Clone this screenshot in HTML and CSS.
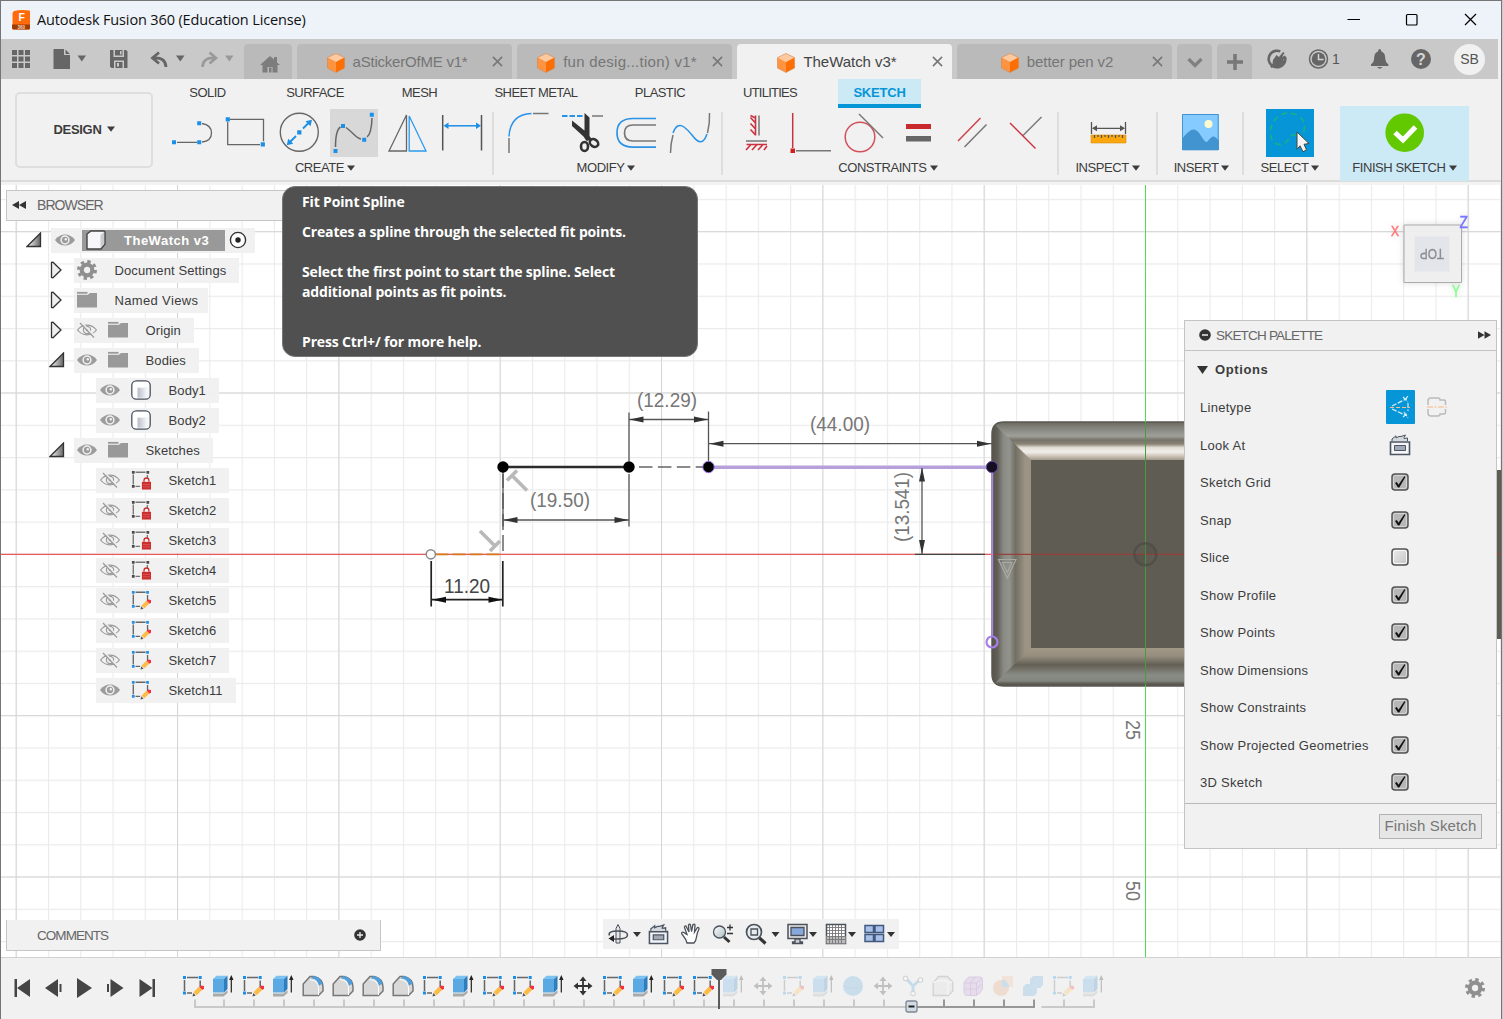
FILE: index.html
```html
<!DOCTYPE html>
<html lang="en">
<head>
<meta charset="utf-8">
<title>Autodesk Fusion 360 (Education License)</title>
<link rel="stylesheet" href="styles.css">
</head>
<body>
<svg class="sprite" aria-hidden="true">
  <defs>
    <linearGradient id="tri-fill" x1="0" y1="0" x2="1" y2="0"><stop offset="0" stop-color="#fff"/><stop offset="1" stop-color="#666"/></linearGradient>
    <linearGradient id="lens" x1="0" y1="0" x2="1" y2="1"><stop offset="0" stop-color="#fff"/><stop offset="1" stop-color="#a9bcc2"/></linearGradient>
    <linearGradient id="cyl" x1="0" y1="0" x2="1" y2="0"><stop offset="0" stop-color="#fff"/><stop offset=".3" stop-color="#fff"/><stop offset=".32" stop-color="#b9bdc9"/><stop offset=".8" stop-color="#f4f5f8"/></linearGradient>
    <linearGradient id="box-fill" x1="0" y1="0" x2="1" y2="1"><stop offset="0" stop-color="#ededed"/><stop offset="1" stop-color="#c4c4c4"/></linearGradient>
  </defs>
  <symbol id="cube" viewBox="0 0 18 20"><path d="M9 .5 17.500 4.500 9 9 .5 4.500z" fill="#ffc9a0"/><path d="M.5 4.500 9 9v10.500L.5 15z" fill="#ff9440"/><path d="M17.500 4.500 9 9v10.500l8.500-4.500z" fill="#fd6f02"/><path d="M9 .5 17.500 4.500V15L9 19.500.5 15V4.500z" fill="none" stroke="#d98447" stroke-width=".6"/></symbol>
  <symbol id="close" viewBox="0 0 12 12"><path d="M1 1l10 10M11 1 1 11" fill="none" stroke="#777" stroke-width="1.700"/></symbol>
  <symbol id="caret" viewBox="0 0 8 6"><path d="M0 .4h8L4 5.800z" fill="currentColor"/></symbol>
  <symbol id="eye" viewBox="0 0 20 20"><path d="M0 10C5 2.600 15 2.600 20 10 15 17.400 5 17.400 0 10z" fill="#9c9c9c"/><circle cx="10" cy="10" r="3.900" fill="#9c9c9c" stroke="#f1f1f1" stroke-width="1.500"/><circle cx="10.800" cy="9.300" r="1.200" fill="#f1f1f1"/></symbol>
  <symbol id="eye-off" viewBox="0 0 20 20"><path d="M.6 10C5.500 3.500 14.500 3.500 19.400 10 14.500 16.500 5.500 16.500 .6 10z" fill="none" stroke="#9a9a9a" stroke-width="1.200"/><circle cx="10" cy="10" r="3.600" fill="none" stroke="#9a9a9a" stroke-width="1.200"/><circle cx="10" cy="10" r="1.300" fill="#9a9a9a"/><path d="M4.500 2.500l14 14.500" stroke="#f1f1f1" stroke-width="1.500"/><path d="M3 3l14 14.500" stroke="#9a9a9a" stroke-width="1.200"/></symbol>
  <symbol id="folder" viewBox="0 0 20 20"><path d="M0 5h10.500L13 3h7v14.500H0z" fill="#999"/><path d="M0 2.800h10.500" stroke="#999" stroke-width="1.800"/><path d="M0 4.500h10.500" stroke="#ddd"/></symbol>
  <symbol id="gear" viewBox="0 0 20 20"><circle cx="10" cy="10" r="8.500" fill="none" stroke="currentColor" stroke-width="3" stroke-dasharray="3.340 3.340"/><circle cx="10" cy="10" r="5.300" fill="none" stroke="currentColor" stroke-width="4.200"/></symbol>
  <symbol id="body" viewBox="0 0 20 20"><rect x=".8" y=".8" width="18.400" height="18.400" rx="4.500" fill="url(#cyl)"/><path d="M2 2h16v4.500q-8 2.500-16 0z" fill="#fff"/><rect x="1.800" y="1.800" width="16.400" height="16.400" rx="3.500" fill="none" stroke="#fff"/><rect x=".8" y=".8" width="18.400" height="18.400" rx="4.500" fill="none" stroke="#4b535f" stroke-width="1.300"/></symbol>
  <symbol id="sk-lock" viewBox="0 0 22 22"><path d="M5 2.500h11M2.500 5v11M18 5.500V10M5 18h5" fill="none" stroke="#777" stroke-width="1.500"/><path d="M1 1h3v3H1zM17 1h3v3h-3zM1 16.500h3v3H1z" fill="#4a4a4a"/><path d="M12 13h10v8.500H12z" fill="#cc2d2d"/><path d="M14.300 13v-1.500a2.700 2.700 0 0 1 5.400 0V13" fill="none" stroke="#cc2d2d" stroke-width="1.400"/><path d="M13 16h8M13 18.500h8" stroke="#e06060" stroke-width=".8"/></symbol>
  <symbol id="sk-edit" viewBox="0 0 22 22"><path d="M5 2.500h11M2.500 5v11M18.200 5.500V12M5 18h5" fill="none" stroke="#666" stroke-width="1.500"/><path d="M1 1h3v3H1zM16.700 1h3v3h-3zM1 16.500h3v3H1z" fill="#1c8fe6"/><path d="M16.800 11.800 20.200 14.800 14.800 20.200 11.500 17.300z" fill="#fdbc45"/><path d="M17.300 12 19 10.500 22 11v2.500L20.500 15z" fill="#f3323f"/><path d="M11.200 18l2.600 2.500-3.300 1z" fill="#555"/></symbol>
  <symbol id="extrude" viewBox="0 0 22 22"><path d="M1 18.500h10.500l4-3.500v3L11.500 21.500H1z" fill="#aaa"/><path d="M1 4 4.500.8H15.500L12 4z" fill="#7cc2f0"/><path d="M1 4h11v13.500H1z" fill="#5aa9e2"/><path d="M12 4 15.500.8V14L12 17.500z" fill="#2e7dbd"/><path d="M19.300 17.500V4M18 4.500 19.300 1.500 20.600 4.500z" fill="#222" stroke="#222" stroke-width="1.200"/></symbol>
  <symbol id="fillet" viewBox="0 0 22 22"><path d="M1.200 20.500V9L8 1.500h4Q20.800 3.500 21 12v4l-4.500 4.500z" fill="#d9d9d9" stroke="#777" stroke-width="1.500"/><path d="M8.500 3.500Q16 3 16.500 11L20.500 8.500Q18 1.500 11.500.9z" fill="#4c9fdc"/><path d="M16.500 20V12.500q-.3-7-8.500-8" fill="none" stroke="#fff"/></symbol>
  <symbol id="move" viewBox="0 0 22 22"><path d="M11 4v14M4 11h14" stroke="#333" stroke-width="1.800"/><path d="M11 1.500l3.500 4.500h-7zM11 20.500l3.500-4.500h-7zM1.500 11l4.500-3.500v7zM20.500 11l-4.500-3.500v7z" fill="#333"/></symbol>
  <symbol id="sphere" viewBox="0 0 22 22"><circle cx="11" cy="11" r="10" fill="#58a5dd"/><path d="M1 11q10 5 20 0" fill="none" stroke="#3e8cc8"/></symbol>
  <symbol id="joint" viewBox="0 0 22 22"><path d="M5 4.500 11 11l6.500-6M11 11v7" fill="none" stroke="#489bd6" stroke-width="3"/><circle cx="3.500" cy="3.500" r="2.400" fill="#fff" stroke="#666"/><circle cx="18.500" cy="5" r="2.400" fill="#fff" stroke="#666"/><circle cx="11" cy="18.500" r="2.400" fill="#fff" stroke="#666"/></symbol>
  <symbol id="solid" viewBox="0 0 22 22"><path d="M1.200 20.500V8L6.500 1.500h9L20.800 7v9l-4.500 4.500z" fill="#ddd" stroke="#777" stroke-width="1.300"/><path d="M1.500 8Q4 5.500 11 5.500t5 3V20M16 8l4.500-1.500" fill="none" stroke="#fff" stroke-width="1.300"/></symbol>
  <symbol id="form" viewBox="0 0 22 22"><path d="M2 8Q2 5.500 7 2h11q2.500 0 2.500 2.500V14Q18 19 14 20.500H5q-3 0-3-3z" fill="#c7a0df" stroke="#9764bb"/><path d="M2 8h12.500q3-2 6-5M14.500 8v12.500M2 14h12.500l6-5M8.500 8v12.500M8.500 8 13 2" fill="none" stroke="#9764bb"/></symbol>
  <symbol id="split" viewBox="0 0 22 22"><circle cx="9" cy="13" r="8" fill="#e9a070"/><path d="M10 1h11v11H10z" fill="#f5bd94"/><path d="M10 4.500A8 8 0 0 1 17 12h-7z" fill="#5da8dc"/></symbol>
  <symbol id="combine" viewBox="0 0 22 22"><path d="M1 12 4 9h4V4l3-3h10v9l-3 3h-3v5l-3 3H1z" fill="#5ba8dd"/><path d="M8 12h6V4h7" fill="none" stroke="#78bbe9"/></symbol>
  <symbol id="lookat" viewBox="0 0 22 22"><path d="M1.500 8h19v12.500h-19z" fill="#f3f5f8" stroke="#4c5563" stroke-width="1.600"/><path d="M5.500 11.500h11v5h-11z" fill="#9fa8b3" stroke="#4c5563"/><path d="M3 7V5L7 1.800V4l3-1.500h2L16.500 1 15 3.500v1L18.500 4v3" fill="#d5d9de" stroke="#4c5563"/></symbol>
  <symbol id="check-on" viewBox="0 0 18 18"><rect x="1" y="1" width="16" height="16" rx="3" fill="#b7b7b7" stroke="#555" stroke-width="1.500"/><rect x="2.500" y="2.500" width="13" height="13" rx="2" fill="none" stroke="#d5d5d5"/><path d="M4 10l1.800-1 1.700 2.800L13.300 3.200l1.200.6L8.300 14.500H7z" fill="#111"/></symbol>
  <symbol id="check-off" viewBox="0 0 18 18"><rect x="1" y="1" width="16" height="16" rx="3" fill="url(#box-fill)" stroke="#555" stroke-width="1.500"/><rect x="2.500" y="2.500" width="13" height="13" rx="2" fill="none" stroke="#fafafa"/></symbol>
  <symbol id="tw-closed" viewBox="0 0 14 18"><path d="M2.500 1.500 4 1.200 12 9 4 16.800l-1.500-.3z" fill="#eee" stroke="#333" stroke-width="1.300"/></symbol>
  <symbol id="tw-open" viewBox="0 0 16 16"><path d="M1 14.500 14.500 1v13.500z" fill="url(#tri-fill)" stroke="#333" stroke-width="1.300"/></symbol>
</svg>

<div class="app">
  <header class="titlebar">
    <svg class="app-logo" viewBox="0 0 18 20"><path d="M2 1Q9-.5 17.500.5q.5 0 .5 1V18q0 1.500-1.500 1.500H2Q0 19.500.5 17V3z" fill="#ff6b0a"/><path d="M0 14.500h18V18q0 1.500-1.500 1.500H2q-2 0-2-1.500z" fill="#9d3c02"/><text x="6.500" y="10.500" font-family="Liberation Sans" font-size="10.500" font-weight="700" fill="#fff">F</text><text x="5.500" y="18.500" font-family="Liberation Sans" font-size="4.500" font-weight="700" fill="#ffd9bd">360</text></svg>
    <span class="app-title">Autodesk Fusion 360 (Education License)</span>
    <svg class="win-buttons" viewBox="0 0 140 20" fill="none" stroke="#000" stroke-width="1.200"><path d="M10.500 9.500h12.500M128 4l11 11M139 4l-11 11" /><rect x="69.500" y="4.500" width="10.500" height="10.500" rx="1"/></svg>
  </header>

  <nav class="tabbar">
    <div class="quick">
      <svg class="q-icons" viewBox="0 39 243 40">
        <path d="M12 50h5v5h-5zM18.500 50h5v5h-5zM25 50h5v5h-5zM12 56.500h5v5h-5zM18.500 56.500h5v5h-5zM25 56.500h5v5h-5zM12 63h5v5h-5zM18.500 63h5v5h-5zM25 63h5v5h-5z" fill="#666"/>
        <path d="M53.500 49H64v6h6v14H53.500zM65.500 49.500 70 54h-4.500z" fill="#666"/>
        <path d="M77.500 55.500h8.500l-4.200 6z" fill="#666"/>
        <path d="M110 50h16l1.500 1.500V68h-16L110 66.500z" fill="#666"/><path d="M113.500 50v7h10.500v-7M114 68v-7.500h10V68" fill="#c9c9c9"/><path d="M115 50h7.500v5.500H115zM115.500 62h7v6h-7z" fill="#666"/><path d="M120 51h1.500v3.500H120zM117 63h2v3.500h-2z" fill="#c9c9c9"/>
        <path d="M159 52.500 152.500 58l6.500 5.500M153.500 58q12-1 12.500 9" fill="none" stroke="#666" stroke-width="2.800"/>
        <path d="M176 55.500h8.500l-4.200 6z" fill="#666"/>
        <path d="M209.500 52.500 216 58l-6.500 5.500M215 58q-12-1-12.500 9" fill="none" stroke="#999" stroke-width="2.600"/>
        <path d="M225 55.500h8.500l-4.200 6z" fill="#999"/>
      </svg>
    </div>
    <div class="tab tab-home"><svg width="20" height="18" viewBox="0 0 20 18"><path d="M10 1 14 4.500V2h3v5.500L20 10h-2.500v7.500h-5V12h-5v5.500h-5V10H0zM9 12.500h2.500v5H9z" fill="#7d7d7d"/></svg></div>
    <div class="tab doc"><span class="doc-label"><svg class="cube"><use href="#cube"/></svg><span class="t1">aStickerOfME v1*</span></span><svg class="x"><use href="#close"/></svg></div>
    <div class="tab doc"><span class="doc-label"><svg class="cube"><use href="#cube"/></svg><span class="t2">fun desig...tion) v1*</span></span><svg class="x"><use href="#close"/></svg></div>
    <div class="tab doc active"><span class="doc-label"><svg class="cube"><use href="#cube"/></svg><span class="t3">TheWatch v3*</span></span><svg class="x"><use href="#close"/></svg></div>
    <div class="tab doc"><span class="doc-label"><svg class="cube"><use href="#cube"/></svg><span class="t4">better pen v2</span></span><svg class="x"><use href="#close"/></svg></div>
    <div class="tab tab-small"><svg width="16" height="16" viewBox="0 0 16 16"><path d="M1.500 5 8 11.500 14.500 5" fill="none" stroke="#808080" stroke-width="3.200"/></svg></div>
    <div class="tab tab-small"><svg width="16" height="16" viewBox="0 0 16 16"><path d="M8 0v16M0 8h16" stroke="#777" stroke-width="3.500"/></svg></div>
    <div class="status">
      <svg class="s-icons" viewBox="1253 39 180 40">
        <circle cx="1277" cy="59" r="8.300" fill="none" stroke="#666" stroke-width="2.600" stroke-dasharray="44 8.150" transform="rotate(-12 1277 59)"/><path d="M1273 60l3.500-5 2.500 2 4-5 1.500 1-2.500 4 3-1.500 1 1.500-3 3 2 1-4 4q-3 2.500-6 1l-3.500 2-1.500-2 2.500-2z" fill="#666"/>
        <circle cx="1318.500" cy="59" r="9" fill="none" stroke="#666" stroke-width="1.500"/><circle cx="1318.500" cy="59" r="6.800" fill="#666"/><path d="M1318.500 54v5.500h5" fill="none" stroke="#d5d5d5" stroke-width="1.500"/>
        <text x="1332" y="64" font-family="Liberation Sans" font-size="14" fill="#555">1</text>
        <path d="M1371 66v-1.500q3-2 3-5 0-7 4-8 0-2.500 1.700-2.500t1.700 2.500q4 1 4 8 0 3 3 5V66zM1377 67h5.500q-2.700 3.500-5.500 0z" fill="#666"/>
        <circle cx="1421" cy="59" r="10" fill="#666"/><text x="1421" y="64.800" text-anchor="middle" font-family="Liberation Sans" font-size="16" font-weight="700" fill="#d5d5d5">?</text>
      </svg>
      <span class="avatar">SB</span>
    </div>
  </nav>

  <section class="ribbon">
    <button class="workspace">DESIGN <svg class="caret"><use href="#caret"/></svg></button>
    <div class="ribbon-main">
      <div class="ribbon-tabs">
        <span class="w-solid">SOLID</span><span class="w-surface">SURFACE</span><span class="w-mesh">MESH</span><span class="w-sheet">SHEET METAL</span><span class="w-plastic">PLASTIC</span><span class="w-util">UTILITIES</span><span class="w-sketch current">SKETCH</span>
      </div>
      <div class="groups">
        <div class="group g-create">
          <div class="tools">
            <svg viewBox="168 109 48 48" fill="none" stroke="#666" stroke-width="1.300"><path d="M177 142.300h20M202 123.500q9.500 1.500 9.500 9.500t-9.500 9"/><path d="M172 140.200h4v4h-4zM197.200 140.200h4v4h-4zM197.200 121.300h4v4h-4z" fill="#1c8fe6" stroke="none"/></svg>
            <svg viewBox="222 109 48 48" fill="none" stroke="#666" stroke-width="1.300"><path d="M230 119.300h33.500v22M227.700 122v22.700H260"/><path d="M225.700 117.200h4.200v4.200h-4.200zM260.700 142.200h4.200v4.200h-4.200z" fill="#1c8fe6" stroke="none"/></svg>
            <svg viewBox="276 109 48 48" fill="none" stroke="#666" stroke-width="1.400"><circle cx="299.300" cy="132.300" r="19"/><path d="M303 128.500l6-6M296 136l-6 6" stroke="#1c8fe6" stroke-width="1.800"/><path d="M297.200 130.200h4.200v4.200h-4.200zM312 119.700l-1.500 6.500-5-5zM286.700 145.200l1.500-6.500 5 5z" fill="#1c8fe6" stroke="none"/></svg>
            <svg class="hover" viewBox="330 109 48 48" fill="none" stroke="#666" stroke-width="1.500"><path d="M335.500 147q0-17 5-20M346 127.500q4 3 8 7t7 4.500M367 137q4.500-3 5-19"/><path d="M333.500 149h4v4h-4zM341 124h4v4h-4zM362.200 137.700h4v4h-4zM369.800 112.700h4v4h-4z" fill="#1c8fe6" stroke="none"/></svg>
            <svg viewBox="383 109 48 48" fill="none" stroke="#666" stroke-width="1.300"><path d="M405.500 115v36H388z"/><path d="M408.200 116v35H425z" stroke="#2a9bf0"/></svg>
            <svg viewBox="437 109 48 48" fill="none" stroke="#555" stroke-width="1.500"><path d="M441.700 115v35.500M480.500 115v35.500"/><path d="M445 125.800h32" stroke="#1c8fe6"/><path d="M442.500 125.800l5-3.300v6.600zM480 125.800l-5-3.300v6.600z" fill="#1c8fe6" stroke="none"/></svg>
          </div>
          <div class="g-label">CREATE <svg class="caret"><use href="#caret"/></svg></div>
        </div>
        <div class="group g-modify">
          <div class="tools">
            <svg viewBox="504 109 48 48" fill="none" stroke="#777" stroke-width="1.500"><path d="M509 153v-15M533 113.500h15.500"/><path d="M509 136.500q1-22 22.500-23" stroke="#2a93e8"/></svg>
            <svg viewBox="558 109 48 48" fill="none" stroke="#777" stroke-width="1.500"><path d="M592 116h11" /><path d="M562 116h21" stroke="#2a93e8" stroke-width="1.800" stroke-dasharray="5.500 2"/><path d="M584.500 113l5 4.500v18.500l2.500 3.500-5.500 1.500-3-4.500-11.500-10.500v-5.500l12.500 10z" fill="#333" stroke="none"/><ellipse cx="584.500" cy="146.500" rx="3.500" ry="4.500" stroke="#333" stroke-width="2.600"/><ellipse cx="594" cy="143" rx="4.500" ry="3.500" transform="rotate(35 594 143)" stroke="#333" stroke-width="2.600"/></svg>
            <svg viewBox="612 109 48 48" fill="none" stroke="#777" stroke-width="1.700"><path d="M656 125h-23q-8.500 0-8.500 8t8.500 8h23"/><path d="M656 118.500h-23q-16 0-16 14.300t16 14.300h23" stroke="#2a93e8"/></svg>
            <svg viewBox="666 109 48 48" fill="none" stroke="#777" stroke-width="1.500"><path d="M670.500 153q0-9 2.500-18M707.500 133q2.500-10 2-20"/><path d="M673 133q4-11 11-6 4 3 8 8 10 14 15-1" stroke="#2a93e8"/></svg>
          </div>
          <div class="g-label">MODIFY <svg class="caret"><use href="#caret"/></svg></div>
        </div>
        <div class="group g-constraints">
          <div class="tools">
            <svg viewBox="732 109 48 48" fill="none" stroke="#cc3340" stroke-width="1.600"><path d="M755.500 115.500v20M755.500 123l-5-5.500M755.500 129l-5-5.500M755.500 135l-5-5.500M755.500 118l-5-2.500M746.500 144.500h20.500M751 144.500l-5 5.500M757 144.500l-5 5.500M763 144.500l-5 5.500M767 146l-3 4"/><path d="M759 115.500v20M746 141h21" stroke="#777" stroke-width="1.500"/></svg>
            <svg viewBox="786 109 48 48" fill="none" stroke="#777" stroke-width="1.500"><path d="M796 150.700h35"/><path d="M792.700 113v35" stroke="#cc3340"/><path d="M790.500 148.500h4.500v4.500h-4.500z" fill="#c22" stroke="none"/></svg>
            <svg viewBox="840 109 48 48" fill="none" stroke="#777" stroke-width="1.500"><circle cx="860" cy="137" r="14.800" stroke="#d3505a"/><path d="M859 114l24 24"/></svg>
            <svg viewBox="894 109 48 48"><path d="M906 124h25v5h-25z" fill="#c9282d"/><path d="M906 136h25v5.500h-25z" fill="#666"/></svg>
            <svg viewBox="948 109 48 48" fill="none" stroke="#777" stroke-width="1.500"><path d="M964.500 147l22-22.500"/><path d="M958 141l22.500-23" stroke="#d3404a"/></svg>
            <svg viewBox="1002 109 48 48" fill="none" stroke="#777" stroke-width="1.500"><path d="M1023 135.500l18.500-18.500"/><path d="M1010 123l25.500 25.500" stroke="#cc3340"/></svg>
          </div>
          <div class="g-label">CONSTRAINTS <svg class="caret"><use href="#caret"/></svg></div>
        </div>
        <div class="group g-inspect">
          <div class="tools">
            <svg viewBox="1084 109 48 48" fill="none" stroke="#555" stroke-width="1.300"><path d="M1091.500 122v12M1125.500 122v12M1093 128.300h31"/><path d="M1092 128.300l5-3v6zM1125 128.300l-5-3v6z" fill="#555" stroke="none"/><path d="M1091 135h35v8h-35z" fill="#fba70d" stroke="#d8920f" stroke-width=".6"/><path d="M1094.500 135v3M1098 135v2M1101.500 135v3M1105 135v2M1108.500 135v3M1112 135v2M1115.500 135v3M1119 135v2M1122.500 135v3"/></svg>
          </div>
          <div class="g-label">INSPECT <svg class="caret"><use href="#caret"/></svg></div>
        </div>
        <div class="group g-insert">
          <div class="tools">
            <svg viewBox="1176 109 48 48"><path d="M1182 114h37v36h-37z" fill="#85cbff"/><path d="M1182 139q7-9.500 11.500-9.500 4 0 8 7t6 5q4-5 6-5 2 0 5.500 4.500v9h-37z" fill="#4294d1"/><circle cx="1208.500" cy="124" r="4" fill="#fffbd0"/><path d="M1182.500 114.500h35.700v35.300h-35.700z" fill="none" stroke="#4294d1"/></svg>
          </div>
          <div class="g-label">INSERT <svg class="caret"><use href="#caret"/></svg></div>
        </div>
        <div class="group g-select">
          <div class="tools">
            <svg class="picked" viewBox="1267 109 48 48" fill="none"><path d="M1298 135q-6-.5-7 1.500c-2 4-5 8-10 8-7 0-10-6-9.500-14 1-10 9-17.500 18-17.500s16 6 16 13-2 9-7.500 9" stroke="#1bb57c" stroke-width="1.400" stroke-dasharray="6 4"/><path d="M1298 132l12 11.500-5 .8 2.500 5.500-3.500 2-3-6-3 3.500z" fill="#f5f5f5" stroke="#444"/></svg>
          </div>
          <div class="g-label">SELECT <svg class="caret"><use href="#caret"/></svg></div>
        </div>
        <div class="group g-finish">
          <div class="tools">
            <svg viewBox="1381 109 48 48"><circle cx="1404.700" cy="132.700" r="19.300" fill="#62c900"/><path d="M1395 132.500l8 7.500 12.500-13" fill="none" stroke="#fff" stroke-width="5"/></svg>
          </div>
          <div class="g-label">FINISH SKETCH <svg class="caret"><use href="#caret"/></svg></div>
        </div>
      </div>
    </div>
  </section>

  <main class="stage">
    <svg class="canvas" viewBox="1 185 1500 772">
      <defs>
        <pattern id="minor" patternUnits="userSpaceOnUse" x="1145" y="553.800" width="32.266" height="32.266"><path d="M0 .5h32.266M.5 0v32.266" stroke="#ebebeb" stroke-width="1.300"/></pattern>
        <pattern id="major" patternUnits="userSpaceOnUse" x="1145" y="553.800" width="161.330" height="161.330"><path d="M0 .5h161.330M.5 0v161.330" stroke="#d6d6d6"/></pattern>
        <linearGradient id="m-top" x1="0" y1="0" x2="0" y2="1"><stop offset="0" stop-color="#55534c"/><stop offset=".08" stop-color="#706e66"/><stop offset=".25" stop-color="#8b8b85"/><stop offset=".4" stop-color="#a0a09b"/><stop offset=".5" stop-color="#77736a"/><stop offset=".6" stop-color="#898274"/><stop offset=".69" stop-color="#e3dfd7"/><stop offset=".8" stop-color="#f1eee9"/><stop offset=".9" stop-color="#cdc5b9"/><stop offset="1" stop-color="#a39988"/></linearGradient>
        <linearGradient id="m-left" x1="0" y1="0" x2="1" y2="0"><stop offset="0" stop-color="#55534b"/><stop offset=".14" stop-color="#615f56"/><stop offset=".3" stop-color="#8b8b85"/><stop offset=".45" stop-color="#93938d"/><stop offset=".6" stop-color="#716e63"/><stop offset=".75" stop-color="#8b8476"/><stop offset=".85" stop-color="#9c9485"/><stop offset="1" stop-color="#9c9282"/></linearGradient>
        <linearGradient id="m-bot" x1="0" y1="0" x2="0" y2="1"><stop offset="0" stop-color="#a19887"/><stop offset=".2" stop-color="#958d7e"/><stop offset=".42" stop-color="#635f55"/><stop offset=".55" stop-color="#77756c"/><stop offset=".68" stop-color="#888c86"/><stop offset=".82" stop-color="#83867f"/><stop offset=".9" stop-color="#5a5851"/><stop offset="1" stop-color="#4a4942"/></linearGradient>
        <clipPath id="m-clip"><path d="M1190 422h-186q-12 0-12 12v240q0 12 12 12h186z"/></clipPath>
      </defs>
      <rect x="1" y="185" width="1500" height="772" fill="#fff"/>
      <rect x="1" y="185" width="1500" height="772" fill="url(#minor)"/>
      <rect x="1" y="185" width="1500" height="772" fill="url(#major)"/>

      <g clip-path="url(#m-clip)">
        <path d="M992 422h39v264h-39z" fill="url(#m-left)"/>
        <path d="M990 420 1031 460h159v-40z" fill="url(#m-top)"/>
        <path d="M990 688 1031 648h159v40z" fill="url(#m-bot)"/>
        <path d="M1031 460h160v188h-160z" fill="#5f5c53"/>
      </g>
      <path d="M1190 422h-186q-12 0-12 12v240q0 12 12 12h186" fill="none" stroke="#595850" stroke-width="1.500"/>
      <path d="M1490 470h11v169h-11z" fill="#5f5c53"/>

      <path d="M1 554.300h991" stroke="#e85a5a" stroke-width="1.300"/><path d="M992 554.300h509" stroke="#97403a" stroke-width="1.200"/>
      <path d="M1145 185h1v237h-1zM1145 686h1v271h-1z" fill="#4fdc4f"/><path d="M1145 422h1v264h-1z" fill="#4a9a40"/>
      <circle cx="1145.300" cy="554.300" r="11" fill="none" stroke="#4c4a43" stroke-opacity=".7" stroke-width="2.500"/><path d="M1145.300 554.300v-10a10 10 0 0 1 10 10zM1145.300 554.300v10a10 10 0 0 1-10-10z" fill="#4c4a43" fill-opacity=".3"/>
      <path d="M998.500 559.500h17.500l-8.700 18.500zM1002.500 562.500h9.500l-4.700 10z" fill="none" stroke="#aaa9a3" stroke-width="1.200"/>

      <path d="M915 554.300h70" stroke="#444" stroke-width="1.300"/>
      <path d="M708.500 467.200H992" stroke="#b5a0dc" stroke-width="3.400"/><path d="M992.200 467v170" stroke="#a78bd8" stroke-width="2"/>
      <path d="M503 467h126" stroke="#2b2b2b" stroke-width="2.600"/>
      <path d="M639 467h69" stroke="#666" stroke-width="1.700" stroke-dasharray="13.500 5.400"/>
      <path d="M503 472v82" stroke="#777" stroke-width="1.700" stroke-dasharray="16 5"/>
      <path d="M435.500 554.300h68" stroke="#d9781e" stroke-width="1.700" stroke-dasharray="13 4"/>

      <g stroke="#555" stroke-width="1.300" fill="none"><path d="M629 412.500V461M708.500 411.500V461M629 474v52.500M503 474v52.500M629 419.500h79M709 443.700h283M503 520h126M922 468v86"/></g>
      <g stroke="#222" stroke-width="1.700"><path d="M431.200 561v45.500M502.800 561v45.500M432 599.700h70"/></g>
      <g fill="#333"><path d="M629.500 419.500l14-3v6zM708 419.500l-14-3v6zM709.500 443.700l14-3v6zM991 443.700l-14-3v6zM503.500 520l14-3v6zM628.500 520l-14-3v6zM922 467.500l-3 14h6zM922 554l-3-14h6z"/><path d="M432 599.700l14-3v6zM502.500 599.700l-14-3v6z" fill="#111"/></g>
      <g stroke="#b9b9b9" stroke-width="3.600"><path d="M507 480.500l10-10M512 475.500l15 15M490 551l10-10M480 531l15 15"/></g>

      <circle cx="503" cy="467" r="5.700"/><circle cx="629" cy="467" r="5.700"/>
      <circle cx="708.500" cy="467" r="5.700" stroke="#9a6ee8" stroke-width="1"/><circle cx="992" cy="467" r="5.700" fill="#15101f" stroke="#6848a8" stroke-width="1"/>
      <circle cx="430.800" cy="554.300" r="4.600" fill="#fff" stroke="#8a8a8a" stroke-width="1.500"/><circle cx="992" cy="642" r="5.500" fill="none" stroke="#a67fe8" stroke-width="2.200"/>

      <g class="dim">
        <text x="637" y="406.500" textLength="60" lengthAdjust="spacingAndGlyphs">(12.29)</text>
        <text x="810" y="431" textLength="60" lengthAdjust="spacingAndGlyphs">(44.00)</text>
        <text x="530" y="507" textLength="60" lengthAdjust="spacingAndGlyphs">(19.50)</text>
        <text x="444" y="592.500" textLength="46" lengthAdjust="spacingAndGlyphs" class="dark">11.20</text>
        <text transform="translate(909 542) rotate(-90)" textLength="70" lengthAdjust="spacingAndGlyphs">(13.541)</text>
        <text transform="translate(1126 720) rotate(90)" textLength="20" lengthAdjust="spacingAndGlyphs">25</text>
        <text transform="translate(1126 881) rotate(90)" textLength="20" lengthAdjust="spacingAndGlyphs">50</text>
      </g>

      <g class="viewcube">
        <path d="M1404 225h57.500v57.500H1404z" fill="#f0f0f0" fill-opacity=".93" stroke="#aaa"/>
        <path d="M1414.500 236.500h35v35h-35z" fill="#e3e5ea"/>
        <text transform="translate(1444 249) rotate(180)" textLength="24" lengthAdjust="spacingAndGlyphs" font-size="15" fill="#8b8e94" stroke="#8b8e94" stroke-width=".4">TOP</text>
        <text x="1391" y="235.500" textLength="8" lengthAdjust="spacingAndGlyphs" font-size="14" fill="#f77" stroke="#f77" stroke-width=".5">X</text>
        <text x="1459.500" y="228" textLength="8.500" lengthAdjust="spacingAndGlyphs" font-size="16" fill="#77f" stroke="#77f" stroke-width=".5">Z</text>
        <text x="1452" y="296.500" textLength="8" lengthAdjust="spacingAndGlyphs" font-size="16" fill="#8f8" stroke="#8f8" stroke-width=".5">Y</text>
      </g>
    </svg>

    <aside class="browser">
      <div class="panel-head"><svg width="14" height="8" viewBox="0 0 14 8"><path d="M7 0v8L0 4zM14 0v8L7 4z" fill="#333"/></svg><span>BROWSER</span></div>
      <div class="row root"><svg class="tw open"><use href="#tw-open"/></svg><div class="pill"><svg><use href="#eye"/></svg><div class="sel"><svg viewBox="0 0 20 20"><path d="M1 4 5 1h13l1 1v12l-4 5H1z" fill="#f7f7fa" stroke="#444" stroke-width="1.400"/><path d="M14.500 5 18 2v12l-3.500 4z" fill="#c9cbd2"/></svg><b>TheWatch v3</b></div><svg class="radio" viewBox="0 0 18 18"><circle cx="9" cy="9" r="7.600" fill="#fff" stroke="#333" stroke-width="1.400"/><circle cx="9" cy="9" r="2.700" fill="#222"/></svg></div></div>
      <div class="row l1"><svg class="tw"><use href="#tw-closed"/></svg><div class="pill"><svg class="gear"><use href="#gear"/></svg><span>Document Settings</span></div></div>
      <div class="row l1"><svg class="tw"><use href="#tw-closed"/></svg><div class="pill named"><svg><use href="#folder"/></svg><span>Named Views</span></div></div>
      <div class="row l1"><svg class="tw"><use href="#tw-closed"/></svg><div class="pill"><svg><use href="#eye-off"/></svg><svg><use href="#folder"/></svg><span>Origin</span></div></div>
      <div class="row l1"><svg class="tw open"><use href="#tw-open"/></svg><div class="pill"><svg><use href="#eye"/></svg><svg><use href="#folder"/></svg><span>Bodies</span></div></div>
      <div class="row l2"><div class="pill"><svg><use href="#eye"/></svg><svg><use href="#body"/></svg><span>Body1</span></div></div>
      <div class="row l2"><div class="pill"><svg><use href="#eye"/></svg><svg><use href="#body"/></svg><span>Body2</span></div></div>
      <div class="row l1"><svg class="tw open"><use href="#tw-open"/></svg><div class="pill"><svg><use href="#eye"/></svg><svg><use href="#folder"/></svg><span>Sketches</span></div></div>
      <div class="row l2"><div class="pill"><svg><use href="#eye-off"/></svg><svg><use href="#sk-lock"/></svg><span>Sketch1</span></div></div>
      <div class="row l2"><div class="pill"><svg><use href="#eye-off"/></svg><svg><use href="#sk-lock"/></svg><span>Sketch2</span></div></div>
      <div class="row l2"><div class="pill"><svg><use href="#eye-off"/></svg><svg><use href="#sk-lock"/></svg><span>Sketch3</span></div></div>
      <div class="row l2"><div class="pill"><svg><use href="#eye-off"/></svg><svg><use href="#sk-lock"/></svg><span>Sketch4</span></div></div>
      <div class="row l2"><div class="pill"><svg><use href="#eye-off"/></svg><svg><use href="#sk-edit"/></svg><span>Sketch5</span></div></div>
      <div class="row l2"><div class="pill"><svg><use href="#eye-off"/></svg><svg><use href="#sk-edit"/></svg><span>Sketch6</span></div></div>
      <div class="row l2"><div class="pill"><svg><use href="#eye-off"/></svg><svg><use href="#sk-edit"/></svg><span>Sketch7</span></div></div>
      <div class="row l2"><div class="pill"><svg><use href="#eye"/></svg><svg><use href="#sk-edit"/></svg><span>Sketch11</span></div></div>
    </aside>

    <div class="tooltip">
      <p class="tip-title">Fit Point Spline</p>
      <p class="tip-lead">Creates a spline through the selected fit points.</p>
      <p class="tip-body">Select the first point to start the spline. Select<br>additional points as fit points.</p>
      <p class="tip-help">Press Ctrl+/ for more help.</p>
    </div>

    <aside class="palette">
      <div class="pal-head"><svg width="12" height="12" viewBox="0 0 12 12"><circle cx="6" cy="6" r="5.800" fill="#333"/><path d="M3 6h6" stroke="#eee" stroke-width="1.500"/></svg><span>SKETCH PALETTE</span><svg width="13" height="8" viewBox="0 0 14 8"><path d="M0 0v8l7-4zM7 0v8l7-4z" fill="#333"/></svg></div>
      <div class="pal-body">
        <div class="opt section"><svg width="11" height="8" viewBox="0 0 11 8"><path d="M0 0h11L5.500 8z" fill="#333"/></svg><b>Options</b></div>
        <div class="opt"><span>Linetype</span><div class="linetype"><svg class="lt-on" viewBox="0 0 29 34" fill="none" stroke="#d8eefa" stroke-width="1.200"><path d="M6 16 21 8.500M6 19l15 7M17 7l5 5M22 6l-4 5M17 27l5-4M18 22l4 6M22 13v8" stroke-dasharray="5 1.500"/><path d="M4 17.500h20" stroke="#f5c08d" stroke-dasharray="4 2"/></svg><svg class="lt-off" viewBox="0 0 20 20" fill="none" stroke="#bbb" stroke-width="1.500"><path d="M1 8V4q0-3 3-3h7q2 0 2 2h4q1.500 0 1.500 1.500V8M1 12v4q0 3 3 3h7q2 0 2-2h4q1.500 0 1.500-1.500V12"/><path d="M0 10h20" stroke="#f3cbaa" stroke-dasharray="6 1.500 2 1.500"/></svg></div></div>
        <div class="opt"><span>Look At</span><svg class="look"><use href="#lookat"/></svg></div>
        <div class="opt"><span>Sketch Grid</span><svg class="chk"><use href="#check-on"/></svg></div>
        <div class="opt"><span>Snap</span><svg class="chk"><use href="#check-on"/></svg></div>
        <div class="opt"><span>Slice</span><svg class="chk"><use href="#check-off"/></svg></div>
        <div class="opt"><span>Show Profile</span><svg class="chk"><use href="#check-on"/></svg></div>
        <div class="opt"><span>Show Points</span><svg class="chk"><use href="#check-on"/></svg></div>
        <div class="opt"><span>Show Dimensions</span><svg class="chk"><use href="#check-on"/></svg></div>
        <div class="opt"><span>Show Constraints</span><svg class="chk"><use href="#check-on"/></svg></div>
        <div class="opt"><span>Show Projected Geometries</span><svg class="chk"><use href="#check-on"/></svg></div>
        <div class="opt"><span>3D Sketch</span><svg class="chk"><use href="#check-on"/></svg></div>
      </div>
      <div class="pal-foot"><button>Finish Sketch</button></div>
    </aside>

    <div class="comments"><span>COMMENTS</span><svg width="12" height="12" viewBox="0 0 12 12"><circle cx="6" cy="6" r="5.800" fill="#333"/><path d="M3 6h6M6 3v6" stroke="#eee" stroke-width="1.300"/></svg></div>

    <div class="navbar">
      <svg viewBox="603 919 296 30" fill="none" stroke="#4b515a" stroke-width="1.300">
        <path d="M616 928.500l2-4 2 4v14.500h-4z" fill="#e5e7ea" stroke-width="1"/><path d="M609.500 935.500q-2-4.500 8.500-4.500 9.500 0 9.500 4t-10.500 4h-4" stroke-width="1.500"/><path d="M608.500 938.500l5.500-3.500v7z" fill="#222" stroke="none"/>
        <g fill="#333" stroke="none"><path d="M633 932h8l-4 5zM771.500 932h8l-4 5zM809 932h8l-4 5zM848 932h8l-4 5zM887 932h8l-4 5z"/></g>
        <use href="#lookat" x="648" y="924" width="21" height="21"/>
        <path d="M687 943q-1-4-4-7.500-2-2-1-3t4 1.500l1 .5-2.500-7q0-2 1.500-1.500l3 6-.5-7q1-1.500 2 0l1 6.500 1.500-7q1.500-1 2 .5l-.5 7 3-4.500q1.500-.5 1.500 1.500-2 4-2.500 8-.5 4-2.500 6z" fill="#fff"/>
        <circle cx="719.500" cy="932" r="6" fill="url(#lens)"/><path d="M724 937l5.500 5" stroke="#333" stroke-width="3"/><path d="M727 927.500h6M730 924.500v6M727 933.500h6" stroke="#333"/>
        <circle cx="754" cy="932" r="7.500" fill="#e7ecee" stroke-width="1.700"/><path d="M751 929h6.500v6h-6.500z"/><path d="M759.500 938l6 5.500" stroke="#333" stroke-width="3.200"/>
        <path d="M788 924.500h19v14h-19z" fill="#e8eaed" stroke-width="1.500"/><path d="M791 927.500h13v8h-13z" fill="#87a8dc"/><path d="M795 939h5v3h2.500v1.500h-10V942h2.500z" fill="#ccc"/>
        <path d="M826.500 924.500h19v19h-19z" fill="#fff" stroke-width="1.500"/><path d="M826.500 936h19v7.500h-19z" fill="#bbb" stroke="none"/><path d="M829.500 925v18.500M832.500 925v18.500M835.500 925v18.500M838.500 925v18.500M841.500 925v18.500M827 927.500h18.500M827 930.500h18.500M827 933.500h18.500M827 936.500h18.500M827 939.500h18.500" stroke="#777" stroke-width=".9"/>
        <path d="M865 925.500h8.500v7H865zM875 925.500h8.500v7H875zM865 934.500h8.500v7H865zM875 934.500h8.500v7H875z" fill="#a9c0e8" stroke="#42597f" stroke-width="1.500"/>
      </svg>
    </div>
  </main>

  <footer class="timeline">
    <svg class="playback" viewBox="13 977 145 22" fill="#454545"><path d="M14.500 979h2.500v18h-2.500zM30 979v18l-13-9zM58 979v18l-13-9zM59.500 984h2v8h-2zM77 978l15 10-15 10zM107 984h2v8h-2zM110.500 979v18l13-9zM139.500 979v18l13-9zM152.500 979h2.500v18h-2.500z"/></svg>
    <div class="history">
      <div class="feats">
        <svg><use href="#sk-edit"/></svg><svg><use href="#extrude"/></svg><svg><use href="#sk-edit"/></svg><svg><use href="#extrude"/></svg><svg><use href="#fillet"/></svg><svg><use href="#fillet"/></svg><svg><use href="#fillet"/></svg><svg><use href="#fillet"/></svg><svg><use href="#sk-edit"/></svg><svg><use href="#extrude"/></svg><svg><use href="#sk-edit"/></svg><svg><use href="#sk-edit"/></svg><svg><use href="#extrude"/></svg><svg><use href="#move"/></svg><svg><use href="#sk-edit"/></svg><svg><use href="#extrude"/></svg><svg><use href="#sk-edit"/></svg><svg><use href="#sk-edit"/></svg><svg class="off"><use href="#extrude"/></svg><svg class="off"><use href="#move"/></svg><svg class="off"><use href="#sk-edit"/></svg><svg class="off"><use href="#extrude"/></svg><svg class="off"><use href="#sphere"/></svg><svg class="off"><use href="#move"/></svg><svg class="off"><use href="#joint"/></svg><svg class="off"><use href="#solid"/></svg><svg class="off"><use href="#form"/></svg><svg class="off"><use href="#split"/></svg><svg class="off"><use href="#combine"/></svg><svg class="off"><use href="#sk-edit"/></svg><svg class="off"><use href="#extrude"/></svg>
      </div>
      <svg class="rail" viewBox="181.500 999.500 922 16" fill="none">
        <path d="M194.500 1000v7.500H911M223.500 1000v7M253.500 1000v7M283.500 1000v7M313.500 1000v7M343.500 1000v7M373.500 1000v7M403.500 1000v7M433.500 1000v7M463.500 1000v7M493.500 1000v7M523.500 1000v7M553.500 1000v7M583.500 1000v7M613.500 1000v7M643.500 1000v7M673.500 1000v7M703.500 1000v7M733.500 1000v7M763.500 1000v7M793.500 1000v7M823.500 1000v7M853.500 1000v7M883.500 1000v7M1041 1007.500h52.500V1000M1063.500 1000v7" stroke="#c9c9c9" stroke-width="2"/>
        <path d="M911 1007.500h122.500V1000M943.500 1000v7M973.500 1000v7M1003.500 1000v7" stroke="#979797" stroke-width="2"/>
        <rect x="905.500" y="1001.500" width="11" height="11" rx="2" fill="#d3dbe4" stroke="#7d8793" stroke-width="1.300"/><path d="M908 1007h6" stroke="#222" stroke-width="2"/>
      </svg>
      <svg class="marker" viewBox="0 0 16 40"><path d="M.5 0h15v5.500L10 11H6L.5 5.500z" fill="#5b5b5b"/><path d="M8 8v32" stroke="#5b5b5b" stroke-width="2"/></svg>
    </div>
    <svg class="gear tl-gear"><use href="#gear"/></svg>
  </footer>
</div>
</body>
</html>
```

FILE: styles.css
```css
* { box-sizing: border-box; }
html, body { margin: 0; height: 100%; overflow: hidden; }
body { font-family: "Liberation Sans", Arial, sans-serif; font-size: 13px; color: #3c3c3c; background: #c9cdd0; }
svg { display: block; flex: none; }
p { margin: 0; }
button { font: inherit; color: inherit; }
.sprite { position: absolute; width: 0; height: 0; }

.app { width: 1502px; height: 1019px; display: flex; flex-direction: column; background: #f1f1f1; border: solid #757575; border-width: 1px 1px 0 1px; }

/* title bar */
.titlebar { height: 38px; flex: none; display: flex; align-items: center; padding: 0 24px 0 11px; background: #eef3f9; }
.app-logo { width: 18px; height: 20px; }
.app-title { flex: 1; margin-left: 7px; font: 14.5px/20px "Open Sans", sans-serif; letter-spacing: -.14px; color: #111; }
.win-buttons { width: 140px; height: 20px; }

/* document tabs */
.tabbar { height: 40px; flex: none; display: flex; align-items: flex-end; gap: 5px; margin-right: 3px; background: #c9c9c9; }
.quick { width: 238px; height: 40px; }
.q-icons { width: 243px; height: 40px; margin-left: -1px; }
.tab { height: 35px; display: flex; align-items: center; justify-content: center; border-radius: 4px 4px 0 0; background: #bababa; flex: none; }
.tab-home { width: 48px; padding: 5px 0 0 3px; }
.tab-small { width: 35px; }
.doc { width: 215px; padding: 2px 9px 0 5px; font-size: 15px; color: #757575; }
.doc-label { flex: 1; display: flex; align-items: center; justify-content: center; gap: 8px; white-space: nowrap; }
.doc-label span { margin-top: -2px; }
.cube { width: 18px; height: 20px; }
.x { width: 11px; height: 11px; margin-bottom: 2px; }
.active { background: #f1f1f1; color: #444; }
.t1 { letter-spacing: -.22px; }
.t2 { letter-spacing: .25px; }
.t3 { letter-spacing: -.05px; }
.t4 { letter-spacing: -.1px; }
.status { display: flex; height: 40px; align-items: center; margin-left: -4px; }
.s-icons { width: 180px; height: 40px; }
.avatar { width: 31px; height: 31px; margin-left: 21px; border-radius: 50%; background: #f1f1f1; font-size: 14px; letter-spacing: -.2px; line-height: 31px; text-align: center; color: #555; }

/* ribbon */
.ribbon { height: 106px; flex: none; display: flex; background: linear-gradient(#f1f1f1 101px, #dcdcdc 101px 103px, #f3f3f3 103px); }
.workspace { width: 138px; height: 76px; margin: 13px 6px 0 14px; border: 2px solid #dedede; border-radius: 5px; background: #f1f1f1; font-weight: 700; font-size: 13px; letter-spacing: -.3px; display: flex; align-items: center; justify-content: center; gap: 5px; padding: 0 0 2px; }
.caret { width: 8px; height: 6px; display: inline-block; margin-left: 0; vertical-align: 1px; }
.ribbon-main { flex: 1; }
.ribbon-tabs { height: 29px; display: flex; gap: 28px; padding-left: 15px; }
.ribbon-tabs span { height: 29px; line-height: 27px; text-align: center; letter-spacing: -.55px; white-space: nowrap; }
.w-solid { width: 67px; }
.w-surface { width: 88px; margin-left: 2px; }
.w-mesh { width: 65px; }
.w-sheet { width: 112px; }
.w-plastic { width: 80px; }
.ribbon-tabs .w-util { width: 82px; padding-left: 2px; letter-spacing: -.75px; }
.w-sketch { width: 83px; }
.ribbon-tabs .current { background: #cce9f6; border-bottom: 4px solid #0696d7; color: #0696d7; font-weight: 700; letter-spacing: -.2px; }
.groups { display: flex; height: 74px; margin-top: -2px; }
.group { position: relative; padding-top: 3px; }
.group + .group::before { content: ""; position: absolute; left: -1px; top: 6px; width: 2px; height: 63px; background: #dedede; }
.tools { display: flex; gap: 6px; height: 48px; }
.tools svg { width: 48px; height: 48px; }
.hover { background: #d8d8d8; }
.picked { background: #0696d7; }
.g-label { height: 21px; line-height: 22px; text-align: center; letter-spacing: -.45px; white-space: nowrap; }
.g-create { width: 334px; padding-left: 9px; }
.g-create .g-label { padding-right: 11px; }
.g-modify { width: 229px; padding-left: 11px; }
.g-modify .g-label { padding-right: 14px; }
.g-constraints { width: 336px; padding-left: 10px; }
.g-constraints .g-label { padding-right: 14px; }
.g-inspect { width: 99px; }
.g-insert { width: 86px; }
.g-insert .g-label { padding-left: 3px; }
.g-select { width: 93px; padding-left: 1px; }
.g-inspect .tools, .g-insert .tools, .g-select .tools, .g-finish .tools { justify-content: center; }
.g-finish { width: 129px; height: 75px; margin-left: 4px; background: #cce9f6; }
.groups .g-finish::before { display: none; }

/* modelling canvas */
.stage { position: relative; height: 772px; flex: none; overflow: hidden; }
.canvas { width: 1500px; height: 772px; }
.dim text { font-size: 20px; fill: #777; }
.dim .dark { fill: #444; }
.viewcube { filter: drop-shadow(0 0 3px rgba(0, 0, 0, .15)); }

/* browser tree */
.browser { position: absolute; left: 5px; top: 5px; width: 374px; }
.panel-head { height: 31px; display: flex; align-items: center; gap: 11px; padding: 0 0 1px 5px; border: 1px solid #c6c6c6; background: #f1f1f1; color: #666; margin-bottom: 7px; font-size: 14px; letter-spacing: -.95px; }
.row { height: 25px; margin-bottom: 5px; display: flex; align-items: center; padding-bottom: 1px; }
.root { padding-left: 20px; }
.l1 { padding-left: 43px; }
.l2 { padding-left: 90px; }
.tw { width: 14px; height: 18px; }
.tw.open { width: 16px; height: 16px; }
.row .pill { height: 25px; display: flex; align-items: center; gap: 11px; padding: 0 13px 0 3px; background: rgba(240, 240, 240, .95); white-space: nowrap; letter-spacing: .12px; }
.row .named { letter-spacing: .35px; padding-right: 10px; }
.l1 .pill { margin-left: 11px; }
.l1 .open + .pill { margin-left: 9px; }
.l2 .pill { padding-left: 4px; }
.pill svg { width: 20px; height: 20px; }
.pill span { margin-left: 6.5px; }
.gear { color: #8f8f8f; }
.root .pill { margin-left: 9px; padding: 0 8px 0 4px; gap: 7px; }
.sel { width: 143px; height: 21px; display: flex; align-items: center; gap: 18px; padding-left: 4px; background: #999; color: #fff; letter-spacing: .5px; }
.root .radio { width: 18px; height: 18px; margin-left: -3px; }

/* tooltip */
.tooltip { position: absolute; left: 281px; top: 1px; width: 416px; height: 171px; padding: 5px 19px; border: 1px solid #777; border-radius: 13px; background: #505050; color: #fff; font: 700 14px/20px "Open Sans", sans-serif; letter-spacing: -.15px; white-space: nowrap; }
.tip-lead { margin-top: 10px; }
.tip-body { margin-top: 20px; }
.tip-help { margin-top: 30px; }

/* sketch palette */
.palette { position: absolute; left: 1183px; top: 135px; width: 313px; height: 529px; border: 1px solid #c4c4c4; background: #f1f1f1; }
.pal-head { height: 30px; display: flex; align-items: center; padding: 0 5px 1px 14px; border-bottom: 1px solid #c4c4c4; color: #666; }
.pal-head span { flex: 1; margin-left: 5px; font-size: 13.5px; letter-spacing: -.8px; }
.opt { height: 37.5px; display: flex; align-items: center; padding-left: 15px; letter-spacing: .15px; }
.opt span { width: 186px; padding-top: 1px; white-space: nowrap; letter-spacing: .28px; }
.section { gap: 7px; padding-left: 12px; letter-spacing: .6px; }
.linetype { display: flex; align-items: center; gap: 12px; }
.lt-on { width: 29px; height: 34px; background: #0696d7; border-radius: 1px; }
.lt-off { width: 20px; height: 20px; }
.look { width: 22px; height: 22px; margin-left: 3px; }
.chk { width: 18px; height: 18px; margin: 0 0 0 5px; }
.pal-foot { height: 46px; margin-top: 2px; display: flex; justify-content: flex-end; padding: 10px 14px 0 0; border-top: 1px solid #b9b9b9; }
.pal-foot button { width: 103px; height: 25px; padding: 0 0 2px; border: 1px solid #b2b2b2; background: #e6e6e6; color: #777; font-size: 15px; letter-spacing: .15px; white-space: nowrap; }

/* floating bars */
.comments { position: absolute; left: 5px; top: 735px; width: 375px; height: 31px; display: flex; align-items: center; justify-content: space-between; padding: 0 14px 0 30px; border: 1px solid #c6c6c6; border-top: 0; background: #f1f1f1; color: #666; letter-spacing: -.95px; font-size: 13.5px; }
.navbar { position: absolute; left: 602px; top: 734px; width: 296px; height: 30px; background: #f1f1f1; }

/* timeline */
.timeline { flex: 1; display: flex; align-items: flex-start; border-top: 1px solid #d2d2d2; background: #f1f1f1; padding-left: 12px; }
.playback { width: 145px; height: 22px; margin-top: 19px; }
.history { position: relative; width: 922px; margin: 17px 0 0 24px; }
.feats { display: flex; gap: 8px; }
.feats svg { width: 22px; height: 22px; }
.feats .off { opacity: .25; }
.rail { width: 922px; height: 16px; margin-top: 2px; }
.marker { position: absolute; left: 528.5px; top: -6px; width: 16px; height: 40px; }
.tl-gear { width: 20px; height: 20px; margin: 20px 0 0 361px; }
```
